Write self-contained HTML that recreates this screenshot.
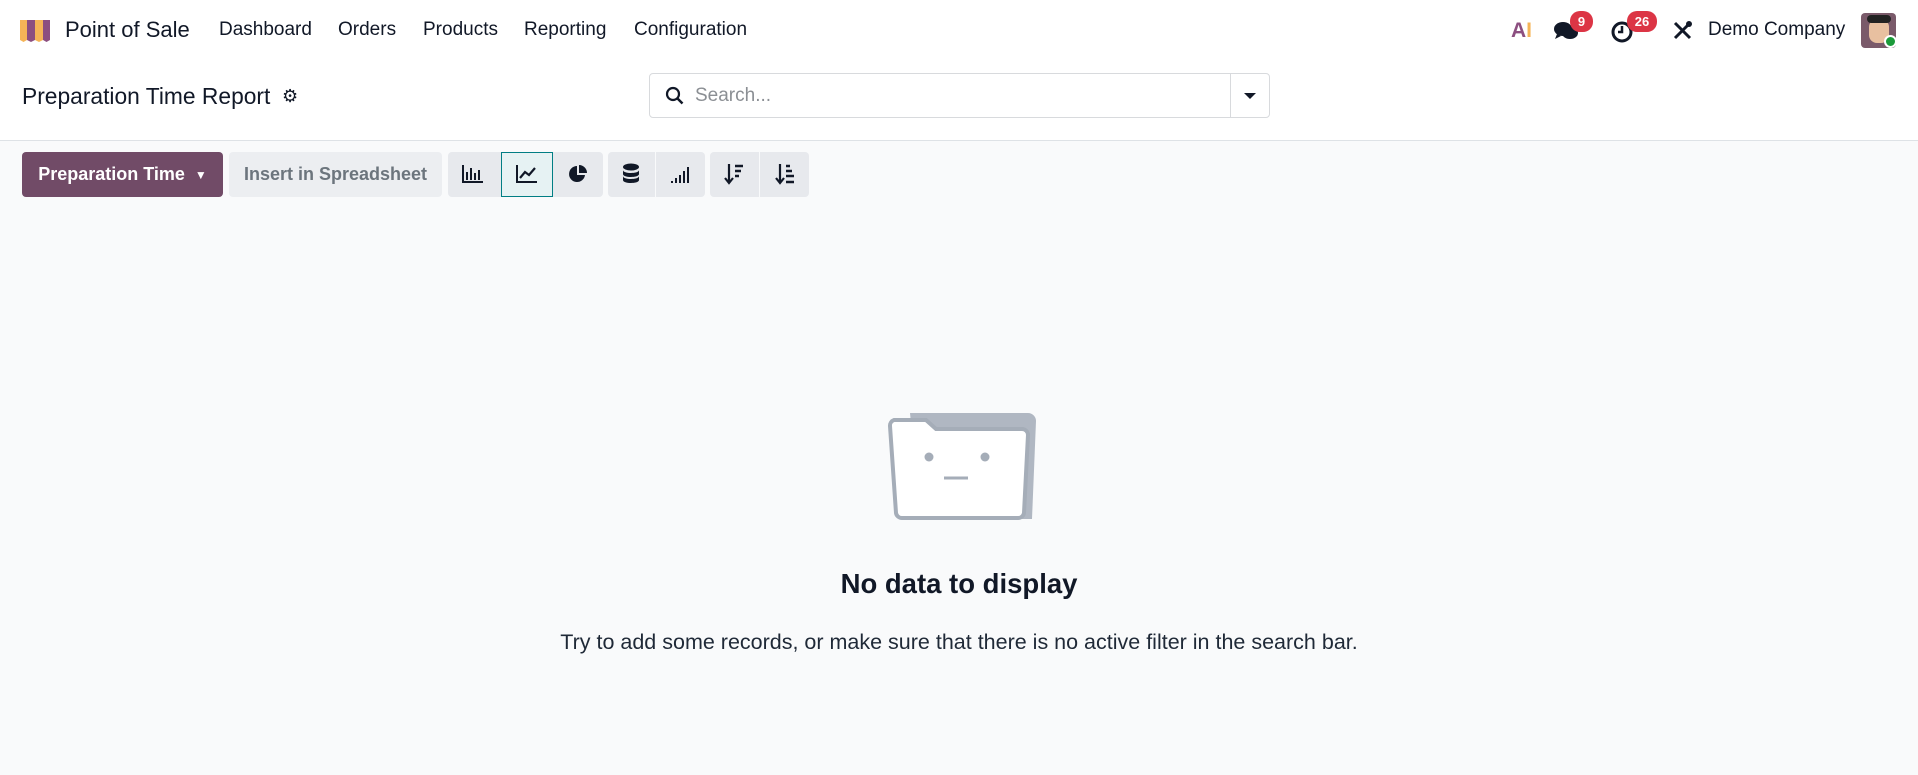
<!DOCTYPE html>
<html><head><meta charset="utf-8"><style>
*{box-sizing:border-box;margin:0;padding:0}
body{width:1918px;height:775px;font-family:"Liberation Sans",sans-serif;background:#f9fafb;color:#111827;position:relative;overflow:hidden}
.top{position:absolute;left:0;top:0;width:1918px;height:141px;background:#fff;border-bottom:1px solid #dee2e6}
.a{position:absolute;white-space:nowrap}
.nav{font-size:19px;top:19px;color:#111827}
.btn{position:absolute;top:152px;height:45px;border-radius:4px;background:#e7e9ed;display:flex;align-items:center;justify-content:center}
.badge{position:absolute;background:#dc3545;color:#fff;font-size:13px;font-weight:bold;border-radius:10px;height:21px;line-height:21px;text-align:center}
</style></head><body>
<div class="top">
<svg class="a" style="left:18px;top:18px" width="34" height="25" viewBox="0 0 34 25">
<path d="M2 2h7v20l-3.5 2-3.5-2z" fill="#f5b457"/><path d="M9 2h8v20l-4 2-4-2z" fill="#8c4f80"/><path d="M17 2h8v20l-4 2-4-2z" fill="#f5b457"/><path d="M25 2h7v20l-3.5 2-3.5-2z" fill="#8c4f80"/></svg>
<div class="a" style="left:65px;top:17px;font-size:22px">Point of Sale</div>
<div class="a nav" style="left:219px">Dashboard</div>
<div class="a nav" style="left:338px">Orders</div>
<div class="a nav" style="left:423px">Products</div>
<div class="a nav" style="left:524px">Reporting</div>
<div class="a nav" style="left:634px">Configuration</div>

<div class="a" style="left:1511px;top:19px;font-size:21px;font-weight:bold"><span style="color:#8c4f80">A</span><span style="color:#f5b457">I</span></div>
<svg class="a" style="left:1553px;top:20px" width="26" height="22" viewBox="0 0 26 22"><ellipse cx="10" cy="9" rx="9" ry="7" fill="#111827"/><path d="M4 14l-2 5 6-3z" fill="#111827"/><ellipse cx="17" cy="13" rx="8" ry="6" fill="#111827"/></svg>
<div class="badge" style="left:1570px;top:11px;width:23px">9</div>
<svg class="a" style="left:1610px;top:20px" width="24" height="24" viewBox="0 0 24 24"><circle cx="12" cy="12" r="9" fill="none" stroke="#111827" stroke-width="3"/><path d="M12 6v6h-4" fill="none" stroke="#111827" stroke-width="2.5"/></svg>
<div class="badge" style="left:1627px;top:11px;width:30px">26</div>
<svg class="a" style="left:1672px;top:20px" width="21" height="21" viewBox="0 0 21 21"><path d="M3 18L17 4M3 3l15 15" stroke="#111827" stroke-width="3"/><circle cx="17" cy="4" r="3" fill="#111827"/></svg>
<div class="a" style="left:1708px;top:19px;font-size:19px">Demo Company</div>
<div class="a" style="left:1861px;top:13px;width:35px;height:35px;border-radius:4px;background:#7a5a6a"><div style="position:absolute;left:8px;top:6px;width:20px;height:24px;border-radius:8px;background:#e8c0a0"></div><div style="position:absolute;left:6px;top:2px;width:24px;height:8px;background:#222;border-radius:4px"></div></div>
<div class="a" style="left:1884px;top:35px;width:13px;height:13px;border-radius:50%;background:#1b9a3a;border:2px solid #fff"></div>

<div class="a" style="left:22px;top:83px;font-size:22.8px">Preparation Time Report</div>
<div class="a" style="left:282px;top:86px;font-size:18px">⚙</div>
<div class="a" style="left:649px;top:73px;width:621px;height:45px;border:1px solid #d8dadd;border-radius:4px;background:#fff">
<svg class="a" style="left:15px;top:12px" width="20" height="20" viewBox="0 0 20 20"><circle cx="8" cy="8" r="6" fill="none" stroke="#111827" stroke-width="2.2"/><path d="M12.5 12.5l5 5" stroke="#111827" stroke-width="2.5"/></svg>
<div class="a" style="left:45px;top:11px;font-size:19px;color:#8b8f94">Search...</div>
<div class="a" style="left:580px;top:0;width:1px;height:43px;background:#d8dadd"></div>
<div class="a" style="left:594px;top:19px;border:6px solid transparent;border-top:6px solid #111827;border-bottom:0"></div>
</div>
</div>

<div class="btn" style="left:22px;width:201px;background:#714b67;color:#fff;font-size:18px;font-weight:bold;top:152px">Preparation Time&nbsp;&nbsp;<span style="font-size:12px">▼</span></div>
<div class="btn" style="left:229px;width:213px;background:#eceef1;color:#6c757d;font-size:18px;font-weight:bold">Insert in Spreadsheet</div>
<div class="btn" style="left:448px;width:155px"></div>
<div class="btn" style="left:501px;width:52px;background:#e6f2f3;border:1px solid #017e84;border-radius:0"></div>
<div class="btn" style="left:608px;width:97px"></div>
<div class="btn" style="left:710px;width:99px"></div>
<div class="a" style="left:655px;top:152px;width:1px;height:45px;background:#f9fafb"></div>
<div class="a" style="left:759px;top:152px;width:1px;height:45px;background:#f9fafb"></div>
<svg class="a" style="left:462px;top:164px" width="22" height="20" viewBox="0 0 22 20"><path d="M1 1v17h20" fill="none" stroke="#111827" stroke-width="2"/><path d="M5 8v8M9 4v12M13 9v7M17 6v10" stroke="#111827" stroke-width="2"/></svg>
<svg class="a" style="left:516px;top:164px" width="22" height="20" viewBox="0 0 22 20"><path d="M1 1v17h20" fill="none" stroke="#111827" stroke-width="2"/><path d="M4 14l5-6 4 3 6-7" fill="none" stroke="#111827" stroke-width="2.2"/></svg>
<svg class="a" style="left:568px;top:164px" width="20" height="20" viewBox="0 0 20 20"><path d="M9 2a8 8 0 1 0 8 9h-8z" fill="#111827"/><path d="M11 1v8h8a8 8 0 0 0-8-8z" fill="#111827"/></svg>
<svg class="a" style="left:622px;top:163px" width="18" height="22" viewBox="0 0 18 22"><ellipse cx="9" cy="4" rx="8" ry="3.5" fill="#111827"/><path d="M1 7c0 4 16 4 16 0v4c0 4-16 4-16 0z M1 13c0 4 16 4 16 0v4c0 4-16 4-16 0z" fill="#111827"/></svg>
<svg class="a" style="left:670px;top:166px" width="20" height="18" viewBox="0 0 20 18"><path d="M2 15v2M6 12v5M10 9v8M14 5v12M18 1v16" stroke="#111827" stroke-width="2"/></svg>
<svg class="a" style="left:724px;top:163px" width="20" height="22" viewBox="0 0 20 22"><path d="M5 1v18M1 15l4 5 4-5" fill="none" stroke="#111827" stroke-width="2.2"/><path d="M11 3h8M11 8h6M11 13h4" stroke="#111827" stroke-width="2.5"/></svg>
<svg class="a" style="left:775px;top:163px" width="20" height="22" viewBox="0 0 20 22"><path d="M5 1v18M1 15l4 5 4-5" fill="none" stroke="#111827" stroke-width="2.2"/><path d="M11 3h4M11 8h6M11 13h8M11 19h8" stroke="#111827" stroke-width="2.5"/></svg>

<svg class="a" style="left:880px;top:408px" width="160" height="116" viewBox="0 0 160 116">
<path d="M30 5h118a8 8 0 0 1 8 8l-4 98H40z" fill="#b0b7c2"/>
<path d="M14 12h32l10 9h86a6 6 0 0 1 6 6l-4 78a6 6 0 0 1-6 5H22a6 6 0 0 1-6-5L10 18a6 6 0 0 1 4-6z" fill="#fff" stroke="#a5adb8" stroke-width="4"/>
<circle cx="49" cy="49" r="4.5" fill="#a5adb8"/><circle cx="105" cy="49" r="4.5" fill="#a5adb8"/>
<path d="M64 70h24" stroke="#a5adb8" stroke-width="3"/>
</svg>
<div class="a" style="left:0;width:1918px;text-align:center;top:568px;font-size:27.5px;font-weight:bold">No data to display</div>
<div class="a" style="left:0;width:1918px;text-align:center;top:630px;font-size:21.5px;color:#1f2937">Try to add some records, or make sure that there is no active filter in the search bar.</div>
</body></html>
